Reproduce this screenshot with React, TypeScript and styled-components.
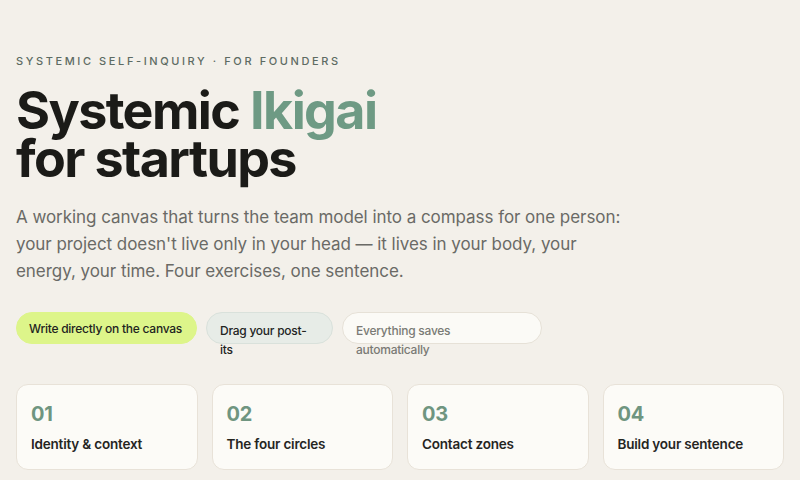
import React from "react";
import styled, { createGlobalStyle } from "styled-components";

const Global = createGlobalStyle`
  * { box-sizing: border-box; }
  html, body { margin: 0; padding: 0; background: #f3f0ea; }
  body { font-family: Inter, "Noto Sans", sans-serif; -webkit-font-smoothing: antialiased; }
`;

const Page = styled.main`
  width: 800px;
  height: 480px;
  overflow: hidden;
  padding: 54px 16px 0 16px;
  display: flex;
  flex-direction: column;
`;

const Eyebrow = styled.div`
  font-size: 11px;
  font-weight: 500;
  letter-spacing: 2.6px;
  color: #5d6b63;
  text-transform: uppercase;
  line-height: 14px;
`;

const Title = styled.h1`
  margin: 19px 0 0 0;
  font-size: 52px;
  line-height: 48px;
  font-weight: 700;
  letter-spacing: -1.6px;
  color: #1b1b18;
`;

const Accent = styled.span`
  color: #6e9a84;
`;

const Lead = styled.p`
  margin: 21px 0 0 0;
  font-size: 17px;
  line-height: 27px;
  color: #6a6a66;
  max-width: 720px;
  letter-spacing: -0.05px;
`;

const Pills = styled.div`
  display: flex;
  gap: 9px;
  margin-top: 27px;
  align-items: flex-start;
`;

type Tone = "lime" | "mint" | "plain";

const Pill = styled.div<{ $tone: Tone; $w: number; $center?: boolean }>`
  width: ${(p) => p.$w}px;
  height: 32px;
  border-radius: 16px;
  padding: ${(p) => (p.$center ? "6px 12px" : "8px 22px 8px 13px")};
  font-size: 12px;
  line-height: 19px;
  letter-spacing: -0.25px;
  font-weight: 500;
  white-space: ${(p) => (p.$center ? "nowrap" : "normal")};
  background: ${(p) => (p.$tone === "lime" ? "#ddf58a" : p.$tone === "mint" ? "#e7ece7" : "#fbfaf6")};
  border: 1px solid ${(p) => (p.$tone === "lime" ? "#ddf58a" : p.$tone === "mint" ? "#d9e1db" : "#e6e1d7")};
  color: ${(p) => (p.$tone === "plain" ? "#7a7a75" : "#22241f")};
  flex-shrink: 0;
`;

const Cards = styled.div`
  display: grid;
  grid-template-columns: repeat(4, 1fr);
  gap: 14px;
  margin-top: 40px;
`;

const Card = styled.div`
  height: 86px;
  background: #fcfbf7;
  border: 1px solid #e8e2d8;
  border-radius: 12px;
  padding: 17px 14px 0 14px;
  display: flex;
  flex-direction: column;
`;

const Num = styled.div`
  font-size: 20px;
  line-height: 24px;
  font-weight: 700;
  color: #6f9580;
  letter-spacing: -0.3px;
`;

const CardTitle = styled.div`
  margin-top: 9px;
  font-size: 13.5px;
  line-height: 18px;
  font-weight: 600;
  color: #25251f;
  letter-spacing: -0.2px;
`;

const steps = [
  { n: "01", t: "Identity & context" },
  { n: "02", t: "The four circles" },
  { n: "03", t: "Contact zones" },
  { n: "04", t: "Build your sentence" },
];

export default function App() {
  return (
    <>
      <Global />
      <Page>
        <Eyebrow>Systemic self-inquiry · for founders</Eyebrow>
        <Title>
          Systemic <Accent>Ikigai</Accent>
          <br />
          for startups
        </Title>
        <Lead>
          A working canvas that turns the team model into a compass for one person:
          <br />
          your project doesn't live only in your head — it lives in your body, your
          <br />
          energy, your time. Four exercises, one sentence.
        </Lead>
        <Pills>
          <Pill $tone="lime" $w={181} $center>Write directly on the canvas</Pill>
          <Pill $tone="mint" $w={127}>Drag your post-its</Pill>
          <Pill $tone="plain" $w={200}>Everything saves automatically</Pill>
        </Pills>
        <Cards>
          {steps.map((s) => (
            <Card key={s.n}>
              <Num>{s.n}</Num>
              <CardTitle>{s.t}</CardTitle>
            </Card>
          ))}
        </Cards>
      </Page>
    </>
  );
}
